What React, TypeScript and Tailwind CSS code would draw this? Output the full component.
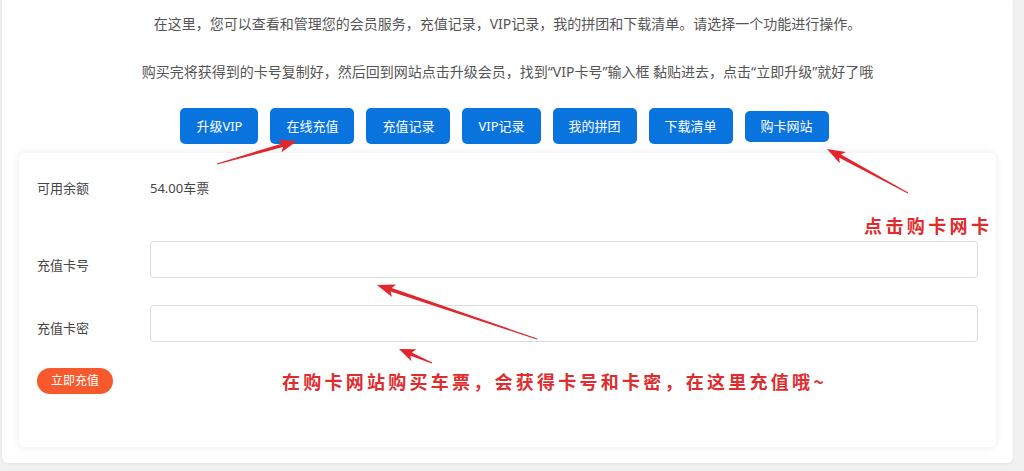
import React from 'react';

const TABS = ['升级VIP', '在线充值', '充值记录', 'VIP记录', '我的拼团', '下载清单', '购卡网站'];

// annotation arrows drawn over the screenshot: [tailX, tailY, tipX, tipY]
const ARROWS: [number, number, number, number][] = [
  [217, 164, 297, 141],
  [908, 193, 827, 149],
  [537, 339, 377, 285],
  [432, 363, 399, 349],
];

function arrowPoints(x1: number, y1: number, x2: number, y2: number) {
  const dx = x2 - x1;
  const dy = y2 - y1;
  const len = Math.hypot(dx, dy);
  const ux = dx / len;
  const uy = dy / len;
  const nx = -uy;
  const ny = ux;
  const head = Math.min(18, len * 0.45);
  const bx = x2 - ux * head;
  const by = y2 - uy * head;
  const nb = 1.8; // shaft half-width near the head
  const hw = 6.5;
  const pts = [
    [x1 + nx * 0.5, y1 + ny * 0.5],
    [bx + ux * 3 + nx * nb, by + uy * 3 + ny * nb],
    [bx + nx * hw, by + ny * hw],
    [x2, y2],
    [bx - nx * hw, by - ny * hw],
    [bx + ux * 3 - nx * nb, by + uy * 3 - ny * nb],
    [x1 - nx * 0.5, y1 - ny * 0.5],
  ];
  return pts.map((p) => `${p[0].toFixed(1)},${p[1].toFixed(1)}`).join(' ');
}

export default function App() {
  return (
    <div
      className="relative w-full h-[471px] overflow-hidden bg-[#f1f1f1] text-[#555]"
      style={{ fontFamily: '"Noto Sans", "Noto Sans CJK SC", sans-serif' }}
    >
      {/* --- PANEL --- */}
      <div className="ml-[2px] w-[1011px] h-[463px] bg-white rounded-b-md shadow-[0_1px_3px_rgba(0,0,0,0.06)] pt-[15px]">
        <p className="text-center text-[14px] leading-[18px]">
          在这里，您可以查看和管理您的会员服务，充值记录，VIP记录，我的拼团和下载清单。请选择一个功能进行操作。
        </p>
        <p className="mt-[30px] text-center text-[14px] leading-[18px]">
          购买完将获得到的卡号复制好，然后回到网站点击升级会员，找到“VIP卡号”输入框 黏贴进去，点击“立即升级”就好了哦
        </p>

        <div className="mt-[27px] h-[36px] flex items-center justify-center gap-[12px] pr-[6px]">
          {TABS.map((t, i) => (
            <button
              key={t}
              className={`px-[16px] rounded-[5px] bg-[#0a74de] text-white text-[13px] leading-none ${
                i === TABS.length - 1 ? 'h-[31px]' : 'h-[36px]'
              }`}
            >
              {t}
            </button>
          ))}
        </div>

        {/* --- CARD --- */}
        <div className="mt-[9px] mx-[17px] h-[294px] bg-white rounded-md shadow-[0_0_8px_rgba(0,0,0,0.09)] px-[18px] pt-[26px]">
          <div className="flex text-[13px] leading-[18px] text-[#444]">
            <span className="w-[113px]">可用余额</span>
            <span>54.00车票</span>
          </div>

          <div className="mt-[44px] flex">
            <span className="w-[113px] pt-[15px] text-[13px] leading-[18px] text-[#444]">充值卡号</span>
            <input className="flex-1 h-[37px] border border-[#dcdcdc] rounded-[4px] outline-none" />
          </div>

          <div className="mt-[27px] flex">
            <span className="w-[113px] pt-[14px] text-[13px] leading-[18px] text-[#444]">充值卡密</span>
            <input className="flex-1 h-[37px] border border-[#dcdcdc] rounded-[4px] outline-none" />
          </div>

          <button className="mt-[26px] w-[76px] h-[26px] rounded-full bg-[#f65a2c] text-white text-[12px] leading-none">
            立即充值
          </button>
        </div>
      </div>

      {/* --- ANNOTATIONS --- */}
      <svg className="absolute inset-0 pointer-events-none" width="1024" height="471">
        {ARROWS.map((a, i) => (
          <polygon key={i} points={arrowPoints(...a)} fill="#e3262b" />
        ))}
      </svg>

      <span
        className="absolute left-[864px] top-[213px] text-[18px] leading-[24px] font-bold tracking-[3.4px] text-[#de2d2f]"
        style={{ fontFamily: '"Noto Sans CJK SC", sans-serif' }}
      >
        点击购卡网卡
      </span>
      <span
        className="absolute left-[282px] top-[369px] text-[18px] leading-[24px] font-bold tracking-[3.25px] text-[#de2d2f] whitespace-nowrap"
        style={{ fontFamily: '"Noto Sans CJK SC", sans-serif' }}
      >
        在购卡网站购买车票，会获得卡号和卡密，在这里充值哦~
      </span>
    </div>
  );
}
